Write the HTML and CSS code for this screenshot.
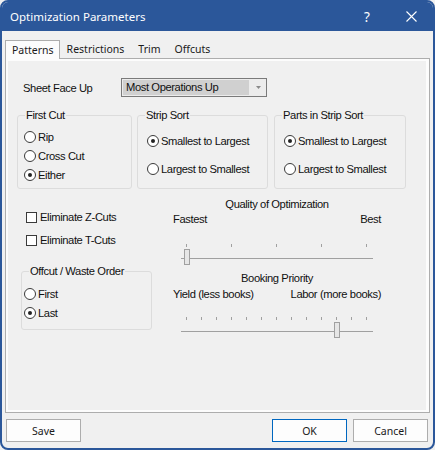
FILE: index.html
```html
<!DOCTYPE html>
<html>
<head>
<meta charset="utf-8">
<link rel="stylesheet" href="styles.css">
</head>
<body>
<div class="window">
  <div class="titlebar">
    <span class="title">Optimization Parameters</span>
    <span class="help">?</span>
    <span class="close"><svg width="11" height="11" viewBox="0 0 11 11"><path d="M0.5 0.5L10.5 10.5M10.5 0.5L0.5 10.5" stroke="#fff" stroke-width="1.1" fill="none"/></svg></span>
  </div>
  <div class="client">
    <div class="tabs">
      <div class="tab active">Patterns</div>
      <div class="tab">Restrictions</div>
      <div class="tab">Trim</div>
      <div class="tab">Offcuts</div>
    </div>
    <div class="panel">
      <div class="page">
        <div class="row-sheet">
          <span class="lbl-sheet">Sheet Face Up</span>
          <div class="combo">
            <span class="combo-sel">Most Operations Up</span>
            <span class="combo-arrow"><svg width="5" height="3" viewBox="0 0 5 3"><path d="M0 0H5L2.5 3Z" fill="#8a8a8a"/></svg></span>
          </div>
        </div>
        <div class="groups">
          <div class="group g-first">
            <span class="legend">First Cut</span>
            <div class="opt"><span class="radio"></span>Rip</div>
            <div class="opt"><span class="radio"></span>Cross Cut</div>
            <div class="opt"><span class="radio on"></span>Either</div>
          </div>
          <div class="group g-strip">
            <span class="legend">Strip Sort</span>
            <div class="opt"><span class="radio on"></span>Smallest to Largest</div>
            <div class="opt"><span class="radio"></span>Largest to Smallest</div>
          </div>
          <div class="group g-parts">
            <span class="legend">Parts in Strip Sort</span>
            <div class="opt"><span class="radio on"></span>Smallest to Largest</div>
            <div class="opt"><span class="radio"></span>Largest to Smallest</div>
          </div>
        </div>
        <div class="lower">
          <div class="left">
            <div class="check-row c1"><span class="cb"></span>Eliminate Z-Cuts</div>
            <div class="check-row c2"><span class="cb"></span>Eliminate T-Cuts</div>
            <div class="group g-offcut">
              <span class="legend">Offcut / Waste Order</span>
              <div class="opt"><span class="radio"></span>First</div>
              <div class="opt"><span class="radio on"></span>Last</div>
            </div>
          </div>
          <div class="right">
            <div class="s-title t1">Quality of Optimization</div>
            <div class="s-ends e1"><span>Fastest</span><span>Best</span></div>
            <div class="slider s1">
              <div class="ticks"><i></i><i></i><i></i><i></i><i></i></div>
              <div class="track"></div>
              <div class="thumb" style="left: 3px"></div>
            </div>
            <div class="s-title t2">Booking Priority</div>
            <div class="s-ends e2"><span>Yield (less books)</span><span>Labor (more books)</span></div>
            <div class="slider s2">
              <div class="ticks"><i></i><i></i><i></i><i></i><i></i><i></i><i></i><i></i><i></i><i></i><i></i><i></i><i></i></div>
              <div class="track"></div>
              <div class="thumb" style="left: 153px"></div>
            </div>
          </div>
        </div>
      </div>
    </div>
    <div class="buttons">
      <button class="btn">Save</button>
      <span class="spacer"></span>
      <button class="btn ok">OK</button>
      <button class="btn">Cancel</button>
    </div>
  </div>
</div>
</body>
</html>
```
FILE: styles.css
```css
html, body {
  margin: 0;
  padding: 0;
  background: #f0f0f0;
}
.window {
  width: 435px;
  height: 450px;
  box-sizing: border-box;
  border: 2px solid #2b579a;
  border-radius: 8px;
  background: #f0f0f0;
  overflow: hidden;
}
.titlebar {
  height: 29px;
  background: #2b579a;
  color: #fff;
  display: flex;
  align-items: center;
  font: 11.5px "Noto Sans", "Liberation Sans", sans-serif;
}
.title {
  flex: 1;
  padding-left: 8px;
}
.help {
  width: 44px;
  text-align: center;
  font-size: 13.5px;
}
.close {
  width: 44px;
  display: flex;
  justify-content: center;
}
.client {
  padding: 9px 3px 0 3px;
}
.tabs {
  display: flex;
  height: 18px;
  font: 10.5px "Noto Sans", "Liberation Sans", sans-serif;
  color: #1a1a1a;
}
.tab {
  padding: 0 7px;
  line-height: 18px;
}
.tab.active {
  border: 1px solid #adadad;
  border-bottom: 0;
  height: 19px;
  box-sizing: border-box;
  padding: 0 5px 0 6px;
  background: #fcfcfc;
  position: relative;
  z-index: 1;
}
.panel {
  border: 1px solid #adadad;
  background: #fcfcfc;
  padding: 2px 3px 2px 2px;
  height: 355px;
  box-sizing: border-box;
}
.page {
  background: #f0f0f0;
  height: 100%;
  box-sizing: border-box;
  padding-top: 17px;
  font: 11.2px "Liberation Sans", Arial, sans-serif;
  letter-spacing: -0.4px;
  color: #111;
}
.row-sheet {
  display: flex;
  align-items: center;
  height: 19px;
  padding-left: 15px;
}
.lbl-sheet {
  width: 98px;
}
.combo {
  width: 146px;
  height: 19px;
  box-sizing: border-box;
  border: 1px solid #7a7a7a;
  background: #ececec;
  display: flex;
}
.combo-sel {
  flex: 1;
  margin: 1px;
  background: #d0d0d0;
  padding-left: 3px;
  line-height: 15px;
}
.combo-arrow {
  width: 16px;
  flex: none;
  display: flex;
  align-items: center;
  justify-content: center;
}
.groups {
  display: flex;
  margin-top: 18px;
  height: 74px;
}
.group {
  position: relative;
  border: 1px solid #dcdcdc;
  border-radius: 3px;
  box-sizing: border-box;
}
.legend {
  position: absolute;
  left: 7px;
  top: -8px;
  line-height: 14px;
  padding: 0 1px;
  background: #f0f0f0;
  white-space: nowrap;
}
.g-first {
  margin-left: 9px;
  width: 115px;
  padding: 11px 0 0 6px;
}
.g-strip {
  margin-left: 5px;
  width: 131px;
  padding: 15px 0 0 9px;
}
.g-parts {
  margin-left: 6px;
  width: 132px;
  padding: 15px 0 0 9px;
}
.opt {
  display: flex;
  align-items: center;
  height: 19px;
  white-space: nowrap;
}
.g-strip .opt + .opt,
.g-parts .opt + .opt {
  margin-top: 9px;
}
.radio {
  width: 12px;
  height: 12px;
  box-sizing: border-box;
  border: 1px solid #3a3a3a;
  border-radius: 50%;
  background: #fff;
  margin-right: 2px;
  flex: none;
  position: relative;
}
.radio.on::after {
  content: "";
  position: absolute;
  left: 3px;
  top: 3px;
  width: 4px;
  height: 4px;
  border-radius: 50%;
  background: #222;
}
.lower {
  display: flex;
}
.left {
  width: 165px;
  flex: none;
}
.check-row {
  display: flex;
  align-items: center;
  height: 14px;
  margin-left: 18px;
  white-space: nowrap;
}
.c1 { margin-top: 21px; }
.c2 { margin-top: 9px; }
.cb {
  width: 11px;
  height: 11px;
  box-sizing: border-box;
  border: 1px solid #3a3a3a;
  background: #fff;
  margin-right: 3px;
  flex: none;
}
.g-offcut {
  margin: 24px 0 0 13px;
  width: 131px;
  height: 59px;
  padding: 12px 0 0 2px;
}
.right {
  width: 208px;
  flex: none;
}
.s-title {
  text-align: center;
  line-height: 14px;
}
.s-ends {
  display: flex;
  justify-content: space-between;
  line-height: 14px;
}
.t1 { margin-top: 8px; }
.e1 { margin-top: 1px; }
.t2 { margin-top: 12px; }
.e2 { margin-top: 2px; }
.slider {
  position: relative;
  margin-left: 8px;
  width: 192px;
}
.s1 { margin-top: 18px; }
.s2 { margin-top: 16px; }
.ticks {
  display: flex;
  justify-content: space-between;
  padding: 0 6px 0 5px;
  height: 3px;
}
.ticks i {
  width: 1px;
  height: 3px;
  background: #a0a0a0;
}
.track {
  margin-top: 11px;
  height: 1px;
  background: #a0a0a0;
}
.thumb {
  position: absolute;
  top: 5px;
  width: 6px;
  height: 16px;
  box-sizing: border-box;
  border: 1px solid #a0a0a0;
  background: #e6e6e6;
}
.buttons {
  display: flex;
  margin-top: 6px;
  padding: 0 2px 0 1px;
}
.spacer {
  flex: 1;
}
.btn {
  width: 75px;
  height: 23px;
  box-sizing: border-box;
  border: 1px solid #adadad;
  background: #fdfdfd;
  font: 10.5px "Noto Sans", "Liberation Sans", sans-serif;
  color: #1a1a1a;
  padding: 0;
  margin: 0;
}
.ok {
  border-color: #0067c0;
  margin-right: 6px;
}
```
